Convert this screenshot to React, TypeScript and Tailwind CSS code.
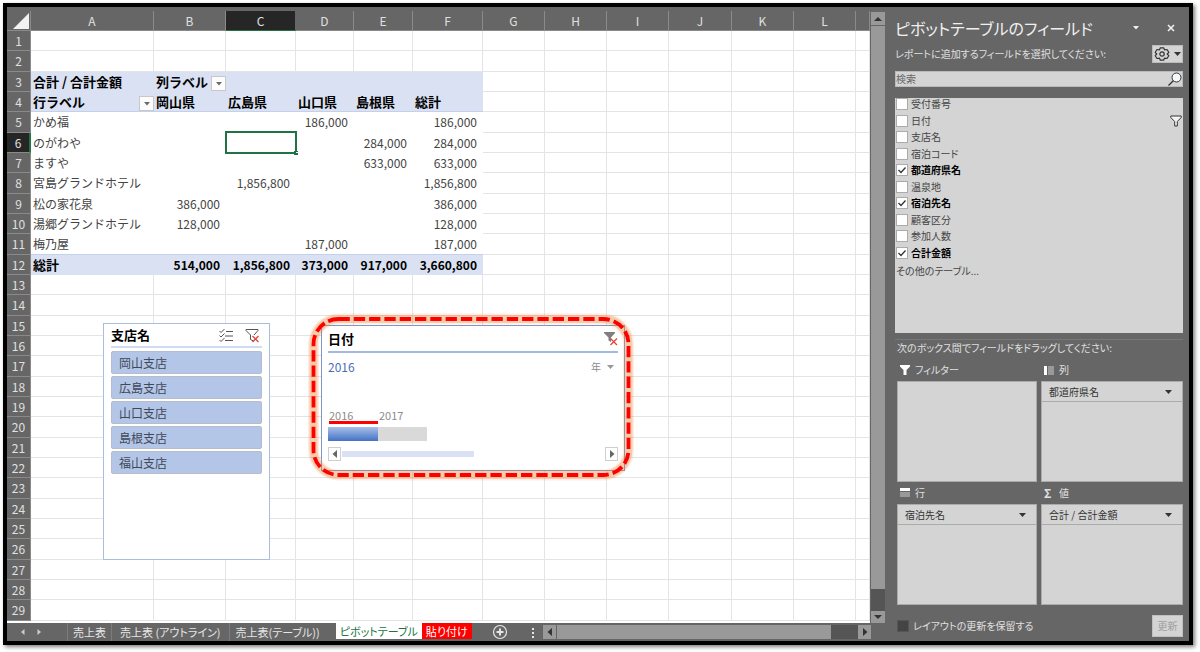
import type { ReactNode } from 'react'

const columns = [
  { name: 'A', width: 'w-[123px]' },
  { name: 'B', width: 'w-[72px]' },
  { name: 'C', width: 'w-[70px]' },
  { name: 'D', width: 'w-[58px]' },
  { name: 'E', width: 'w-[59px]' },
  { name: 'F', width: 'w-[70px]' },
  { name: 'G', width: 'w-[62px]' },
  { name: 'H', width: 'w-[62px]' },
  { name: 'I', width: 'w-[62px]' },
  { name: 'J', width: 'w-[63px]' },
  { name: 'K', width: 'w-[62px]' },
  { name: 'L', width: 'w-[62px]' },
  { name: '', width: '' },
]

// cells A to F of the pivot table, keyed by row number
const pivot: Record<number, string[]> = {
  3: ['合計 / 合計金額', '列ラベル', '', '', '', ''],
  4: ['行ラベル', '岡山県', '広島県', '山口県', '島根県', '総計'],
  5: ['かめ福', '', '', '186,000', '', '186,000'],
  6: ['のがわや', '', '', '', '284,000', '284,000'],
  7: ['ますや', '', '', '', '633,000', '633,000'],
  8: ['宮島グランドホテル', '', '1,856,800', '', '', '1,856,800'],
  9: ['松の家花泉', '386,000', '', '', '', '386,000'],
  10: ['湯郷グランドホテル', '128,000', '', '', '', '128,000'],
  11: ['梅乃屋', '', '', '187,000', '', '187,000'],
  12: ['総計', '514,000', '1,856,800', '373,000', '917,000', '3,660,800'],
}

const rows = Array.from({ length: 29 }, (_, i) => i + 1)

const branches = ['岡山支店', '広島支店', '山口支店', '島根支店', '福山支店']

const fields = [
  { name: '受付番号', checked: false },
  { name: '日付', checked: false, filtered: true },
  { name: '支店名', checked: false },
  { name: '宿泊コード', checked: false },
  { name: '都道府県名', checked: true },
  { name: '温泉地', checked: false },
  { name: '宿泊先名', checked: true },
  { name: '顧客区分', checked: false },
  { name: '参加人数', checked: false },
  { name: '合計金額', checked: true },
]

function Caret({ className = '' }: { className?: string }) {
  return (
    <svg viewBox="0 0 7 4" className={`h-1 w-[7px] shrink-0 ${className}`} aria-hidden="true">
      <path d="M0 0h7L3.5 4z" fill="currentColor" />
    </svg>
  )
}

function Arrow({ d }: { d: string }) {
  return (
    <svg viewBox="0 0 8 8" className="size-2" aria-hidden="true">
      <path d={d} fill="currentColor" />
    </svg>
  )
}

const LEFT = 'M6 0v8L1.5 4z'
const RIGHT = 'M2 0v8l4.5-4z'
const UP = 'M0 6h8L4 2z'
const DOWN = 'M0 2h8L4 6z'

function CellDropdown({ label }: { label: string }) {
  return (
    <button
      type="button"
      aria-label={label}
      className="absolute right-0 bottom-0 flex size-[15px] items-center justify-center border border-[#c8c8c8] bg-[#fcfcfc] text-[#6b6b6b]"
    >
      <svg viewBox="0 0 6 4" className="h-1 w-1.5" aria-hidden="true">
        <path d="M0 0h6L3 3.5z" fill="currentColor" />
      </svg>
    </button>
  )
}

function Sheet() {
  return (
    <table className="w-full table-fixed border-separate border-spacing-0 bg-white text-xs text-[#444]">
      <colgroup>
        <col className="w-6" />
        {columns.map((c, i) => (
          <col key={i} className={c.width} />
        ))}
      </colgroup>
      <thead>
        <tr className="h-5">
          <th className="border-r border-b border-[#8a8a8a] bg-[#666] p-0">
            <svg viewBox="0 0 23 19" className="h-[19px] w-[23px]" aria-hidden="true">
              <path d="M22 2v16H6z" fill="#f2f2f2" />
            </svg>
          </th>
          {columns.map((c, i) => (
            <th
              key={i}
              className={`border-r border-b p-0 leading-4 font-normal ${
                c.name === 'C'
                  ? 'border-r-[#666] border-b-[#217346] bg-[#262626] text-[#e0e0e0]'
                  : 'border-r-[#8a8a8a] border-b-[#8a8a8a] bg-[#666] text-[#e0e0e0]'
              }`}
            >
              {c.name}
            </th>
          ))}
        </tr>
      </thead>
      <tbody>
        {rows.map((row) => {
          const values = pivot[row]
          const strong = row === 3 || row === 4 || row === 12
          return (
            <tr key={row} className={row % 3 === 2 ? 'h-[21px]' : 'h-5'}>
              <th
                className={`border-b p-0 leading-4 font-normal text-[#e0e0e0] ${
                  row === 6
                    ? 'border-r-2 border-r-[#217346] border-b-[#8a8a8a] bg-[#262626]'
                    : 'border-r border-[#8a8a8a] bg-[#666]'
                }`}
              >
                {row}
              </th>
              {columns.map((c, i) => {
                if (!values || i > 5) {
                  return <td key={i} className="border-r border-b border-[#e4e4e4] p-0" />
                }
                const isLabel = i === 0 || row < 5
                return (
                  <td
                    key={i}
                    className={`relative border-b p-0 leading-4 whitespace-nowrap ${
                      strong ? 'bg-[#d9e1f2] font-bold text-black' : ''
                    } ${row === 4 || row === 11 ? 'border-b-[#c3d1ec]' : strong ? 'border-b-[#d9e1f2]' : 'border-b-white'} ${
                      isLabel ? 'pl-0.5 text-left' : 'pr-1.5 text-right'
                    } ${isLabel && strong ? 'text-[13px]' : ''}`}
                  >
                    {values[i]}
                    {row === 3 && i === 1 && <CellDropdown label="列ラベルのフィルター" />}
                    {row === 4 && i === 0 && <CellDropdown label="行ラベルのフィルター" />}
                    {row === 6 && i === 2 && (
                      <span className="absolute -inset-x-px -top-0.5 -bottom-0.5 border-2 border-[#217346]">
                        <span className="absolute -right-[3px] -bottom-[3px] size-1 bg-[#217346]" />
                      </span>
                    )}
                  </td>
                )
              })}
            </tr>
          )
        })}
      </tbody>
    </table>
  )
}

function Slicer() {
  return (
    <section className="absolute top-[312px] left-24 flex h-[237px] w-[167px] flex-col border border-[#a9bde0] bg-white px-[7px] pt-1">
      <header className="flex h-5 items-center border-b-2 border-[#cfdcf1] pb-1">
        <h2 className="flex-1 text-[13px] leading-4 font-bold text-black">支店名</h2>
        <button type="button" aria-label="複数選択" className="mr-3">
          <svg viewBox="0 0 14 14" className="size-3.5" fill="none" stroke="#555" aria-hidden="true">
            <path d="M.5 3L2 4.500 5.500 1M.5 7.500L2 9l3.500-3.500M.5 12L2 13.500 5.500 10M7 3.500h7M6 8h8M6 12.500h8" />
          </svg>
        </button>
        <button type="button" aria-label="フィルターのクリア" className="mr-0.5">
          <svg viewBox="0 0 15 15" className="size-[15px]" fill="none" aria-hidden="true">
            <path d="M8.5 13L5.500 11.500V7L1 2.500V1.500h12v1L9 7" stroke="#555" />
            <path d="M7.500 8l6 6M13.500 8l-6 6" stroke="#e0453a" strokeWidth="1.3" />
          </svg>
        </button>
      </header>
      <div className="mt-[3px] flex flex-col gap-0.5">
        {branches.map((b) => (
          <button
            key={b}
            type="button"
            className="h-[23px] rounded-xs border border-[#b5bccb] bg-[#b4c6e7] pl-[7px] text-left text-xs leading-4 text-[#404858]"
          >
            {b}
          </button>
        ))}
      </div>
    </section>
  )
}

function Timeline() {
  return (
    <section className="absolute top-[314px] left-[314px] flex h-[146px] w-[304px] flex-col border border-[#7d97c9] bg-white px-1.5">
      <header className="flex h-[27px] shrink-0 items-center border-b-2 border-[#a2b9e2]">
        <h2 className="flex-1 text-[13px] leading-4 font-bold text-black">日付</h2>
        <button type="button" aria-label="フィルターのクリア">
          <svg viewBox="0 0 14 14" className="size-3.5" aria-hidden="true">
            <path d="M0 0h11v1L7 5.5V10L4.5 8.5v-3L0 1z" fill="#7f7f7f" />
            <path d="M6.5 6.5L13 13M13 6.5L6.5 13" stroke="#e0453a" strokeWidth="1.3" />
          </svg>
        </button>
      </header>
      <div className="mt-1.5 flex items-center justify-between pr-1">
        <span className="text-xs leading-4 text-[#4a6db5]">2016</span>
        <button type="button" className="flex items-center gap-1.5 text-[10px] leading-4 text-[#8c8c8c]">
          年
          <Caret className="text-[#999]" />
        </button>
      </div>
      <div className="mt-8 flex text-[11px] leading-4 text-[#8c8c8c]">
        <span className="w-[50px] pl-px">2016</span>
        <span className="w-[49px] pl-px">2017</span>
      </div>
      <div className="-mt-0.5 ml-px h-[3px] w-[49px] bg-[#f00]" />
      <div className="mt-[3px] flex h-3.5">
        <div className="w-[50px] bg-linear-to-b from-[#a9bfe6] to-[#4472c4]" />
        <div className="w-[49px] bg-[#d9d9d9]" />
      </div>
      <div className="mt-1.5 flex h-3.5 items-center">
        <button type="button" aria-label="前へ" className="flex h-3.5 w-[13px] items-center justify-center border border-[#cfcfcf] text-[#666]">
          <Arrow d={LEFT} />
        </button>
        <div className="ml-px flex-1">
          <div className="h-1.5 w-[132px] bg-[#d9e1f2]" />
        </div>
        <button type="button" aria-label="次へ" className="flex h-3.5 w-[13px] items-center justify-center border border-[#cfcfcf] text-[#666]">
          <Arrow d={RIGHT} />
        </button>
      </div>
      <svg
        viewBox="0 0 332 172"
        className="pointer-events-none absolute -top-[15px] -left-[15px] h-[172px] w-[332px] overflow-visible"
        fill="none"
        aria-hidden="true"
      >
        <g stroke="#ed7d31">
          <rect x="6.500" y="8" width="315" height="156" rx="25" strokeOpacity=".14" strokeWidth="11" />
          <rect x="6.500" y="8" width="315" height="156" rx="25" strokeOpacity=".3" strokeWidth="8" />
        </g>
        <rect x="6.500" y="8" width="315" height="156" rx="25" stroke="#f00" strokeWidth="3.8" strokeDasharray="11.3 4" />
      </svg>
    </section>
  )
}

function SheetTabs() {
  const tab = 'flex items-center border-r border-[#7c7c7c] px-[5px] text-[#e6e6e6]'
  return (
    <nav className="flex h-[18px] bg-[#666] text-[11px] leading-4 whitespace-nowrap [font-feature-settings:'palt']">
      <div className="flex w-[61px] items-center gap-2 border-r border-[#7c7c7c] pl-3 text-[#ccc]">
        <button type="button" aria-label="前のシート">
          <svg viewBox="0 0 8 8" className="size-2" aria-hidden="true"><path d="M5.5 1v6L2 4z" fill="currentColor" /></svg>
        </button>
        <button type="button" aria-label="次のシート">
          <svg viewBox="0 0 8 8" className="size-2" aria-hidden="true"><path d="M2.5 1v6L6 4z" fill="currentColor" /></svg>
        </button>
      </div>
      <button type="button" className={tab}>売上表</button>
      <button type="button" className="flex items-center border-r border-[#7c7c7c] px-2 text-[#e6e6e6]">売上表 (アウトライン)</button>
      <button type="button" className="flex items-center pr-4 pl-1.5 text-[#e6e6e6]">売上表(テーブル))</button>
      <button type="button" className="mb-0.5 bg-white px-1 text-[#217346]">ピボットテーブル</button>
      <button type="button" className="mb-0.5 bg-[#f00] px-1 text-white">貼り付け</button>
      <button type="button" aria-label="新しいシート" className="ml-5 text-[#e6e6e6]">
        <svg viewBox="0 0 16 16" className="size-4" fill="none" stroke="currentColor" aria-hidden="true">
          <circle cx="8" cy="8" r="6.5" strokeWidth="1.2" />
          <path d="M8 4.5v7M4.500 8h7" strokeWidth="2" />
        </svg>
      </button>
      <div className="min-w-0 flex-1" />
      <svg viewBox="0 0 4 12" className="mt-1 mr-2 h-3 w-1 text-[#e6e6e6]" aria-hidden="true">
        <path d="M1 1h2v2H1zM1 5h2v2H1zM1 9h2v2H1z" fill="currentColor" />
      </svg>
      <div className="mt-0.5 mr-4 flex h-3.5 w-[328px] bg-[#555] text-[#333]">
        <button type="button" aria-label="左へスクロール" className="flex w-3.5 items-center justify-center border-r border-[#666] bg-[#999]">
          <Arrow d={LEFT} />
        </button>
        <div className="w-[274px] bg-[#999]" />
        <div className="flex-1" />
        <button type="button" aria-label="右へスクロール" className="flex w-[13px] items-center justify-center bg-[#999]">
          <Arrow d={RIGHT} />
        </button>
      </div>
    </nav>
  )
}

function Area({ icon, title, value }: { icon: ReactNode; title: string; value?: string }) {
  return (
    <div>
      <h3 className="flex h-[22px] items-center gap-1 pl-[3px] text-[10px] leading-4 text-[#e0e0e0]">
        {icon}
        {title}
      </h3>
      <div className="h-[101px] border border-[#ababab] bg-[#d4d4d4]">
        {value && (
          <button
            type="button"
            className="flex h-5 w-full items-center justify-between border-b border-[#ababab] pr-2.5 pl-[7px] text-[10px] leading-4 text-[#333]"
          >
            {value}
            <Caret />
          </button>
        )}
      </div>
    </div>
  )
}

function FieldPane() {
  return (
    <aside className="flex w-[302px] shrink-0 flex-col bg-[#666] pr-1.5 pl-2 text-[10px] leading-4 text-[#e0e0e0] [font-feature-settings:'palt']">
      <header className="flex h-[38px] items-center pt-1 text-[#f0f0f0]">
        <h1 className="flex-1 text-base leading-6">ピボットテーブルのフィールド</h1>
        <button type="button" aria-label="作業ウィンドウのオプション" className="mr-7">
          <svg viewBox="0 0 6 4" className="h-1 w-1.5" aria-hidden="true"><path d="M0 0h6L3 3.5z" fill="currentColor" /></svg>
        </button>
        <button type="button" aria-label="閉じる" className="mr-2">
          <svg viewBox="0 0 8 8" className="size-2" aria-hidden="true"><path d="M1 1l6 6M7 1L1 7" stroke="currentColor" strokeWidth="1.6" /></svg>
        </button>
      </header>
      <div className="flex items-center justify-between">
        <p>レポートに追加するフィールドを選択してください:</p>
        <button type="button" aria-label="ツール" className="flex h-[18px] w-[31px] items-center justify-center gap-1 border border-[#bbb] bg-[#d4d4d4] text-[#333]">
          <svg viewBox="0 0 16 16" className="size-4" fill="none" stroke="currentColor" strokeWidth="1.2" strokeLinejoin="round" aria-hidden="true">
            <path d="M6.300 1.800h3.400l.8 2.100 2.500-.4L14.800 6.300 13.200 8l1.600 1.700L13 12.500l-2.500-.4-.8 2.100H6.300l-.8-2.100-2.500.4L1.200 9.700 2.800 8 1.200 6.300 3 3.500l2.500.4z" />
            <circle cx="8" cy="8" r="2.200" />
          </svg>
          <Caret />
        </button>
      </div>
      <div className="mt-2 flex h-4 items-center border border-[#bbb] bg-[#d4d4d4]">
        <input
          type="search"
          aria-label="フィールドの検索"
          placeholder="検索"
          className="min-w-0 flex-1 leading-[14px] text-[#333] outline-none placeholder:text-[#666]"
        />
        <svg viewBox="0 0 14 14" className="size-3.5" fill="none" stroke="#333" aria-hidden="true">
          <circle cx="8.5" cy="5.5" r="4.5" fill="#f4f8fa" />
          <path d="M5.3 8.700L.5 13.500" strokeWidth="1.3" />
        </svg>
      </div>
      <div className="mt-[11px] h-[235px] bg-[#d4d4d4] text-[#444]">
        <ul className="-mt-0.5 grid h-[165px] pl-px">
          {fields.map((f) => (
            <li key={f.name} className="flex items-center">
              <label className={`flex flex-1 items-center gap-[3px] ${f.checked ? 'font-bold text-black' : ''}`}>
                <span className="relative flex">
                  <input
                    type="checkbox"
                    defaultChecked={f.checked}
                    className="peer size-3 appearance-none border border-[#ababab] bg-white"
                  />
                  <svg viewBox="0 0 12 12" className="absolute inset-0 hidden size-3 peer-checked:block" fill="none" stroke="#333" aria-hidden="true">
                    <path d="M2.5 6L5 8.500l4.500-5" strokeWidth="1.3" />
                  </svg>
                </span>
                {f.name}
              </label>
              {f.filtered && (
                <svg viewBox="0 0 12 12" className="mr-px size-3" fill="#f4f4f4" stroke="#333" aria-hidden="true">
                  <path d="M.8 1h10.400v1.500L7.300 6.500V11H4.700V6.500L.8 2.500z" />
                </svg>
              )}
            </li>
          ))}
        </ul>
        <a href="#tables" className="mt-0.5 block pl-px">その他のテーブル...</a>
      </div>
      <p className="mt-1.5 border-t border-[#777] pl-0.5">次のボックス間でフィールドをドラッグしてください:</p>
      <div className="mt-[3px] grid grid-cols-[140px_1fr] gap-x-1 pl-0.5">
        <Area
          title="フィルター"
          icon={<svg viewBox="0 0 10 10" className="mr-px size-2.5" aria-hidden="true"><path d="M0 0h10v1.500L6.500 5v5h-3V5L0 1.500z" fill="#fff" /></svg>}
        />
        <Area
          title="列"
          value="都道府県名"
          icon={<svg viewBox="0 0 10 10" className="mr-px size-2.5" aria-hidden="true"><path d="M4 1h6v9H4z" fill="#999" /><path d="M0 1h3v9H0z" fill="#fff" /></svg>}
        />
        <Area
          title="行"
          value="宿泊先名"
          icon={<svg viewBox="0 0 10 10" className="mr-px size-2.5" aria-hidden="true"><path d="M0 4h10v5H0z" fill="#999" /><path d="M0 0h10v3H0z" fill="#fff" /></svg>}
        />
        <Area title="値" value="合計 / 合計金額" icon={<span className="w-[11px] text-xs font-bold">Σ</span>} />
      </div>
      <footer className="mt-2.5 flex items-center justify-between pl-0.5">
        <label className="flex items-center gap-1">
          <input type="checkbox" className="size-3 appearance-none border border-[#555] bg-[#444]" />
          レイアウトの更新を保留する
        </label>
        <button type="button" disabled className="h-[22px] w-[31px] border border-[#c0c0c0] bg-[#d4d4d4] text-[#a0a0a0]">
          更新
        </button>
      </footer>
    </aside>
  )
}

export default function App() {
  return (
    <div className="bg-white pt-[3px] pr-[7px] pb-[7px] pl-[3px] font-['Noto_Sans_CJK_JP',sans-serif]">
      <main className="flex border-4 border-black bg-[#666] shadow-[2px_2px_4px_rgba(0,0,0,0.5)]">
        <div className="flex min-w-0 flex-1 flex-col pt-1">
          <div className="flex flex-1">
            <div className="relative min-w-0 flex-1 overflow-hidden bg-white pb-0.5">
              <Sheet />
              <Slicer />
              <Timeline />
            </div>
            <div className="mt-px mr-0.5 ml-px flex w-3.5 flex-col bg-[#555] text-[#333]">
              <button type="button" aria-label="上へスクロール" className="flex h-3.5 items-center justify-center border-b border-[#666] bg-[#999]">
                <Arrow d={UP} />
              </button>
              <div className="flex-1 bg-[#999]" />
              <div className="h-[22px]" />
              <button type="button" aria-label="下へスクロール" className="flex h-3 items-center justify-center bg-[#999]">
                <Arrow d={DOWN} />
              </button>
            </div>
          </div>
          <SheetTabs />
        </div>
        <FieldPane />
      </main>
    </div>
  )
}
